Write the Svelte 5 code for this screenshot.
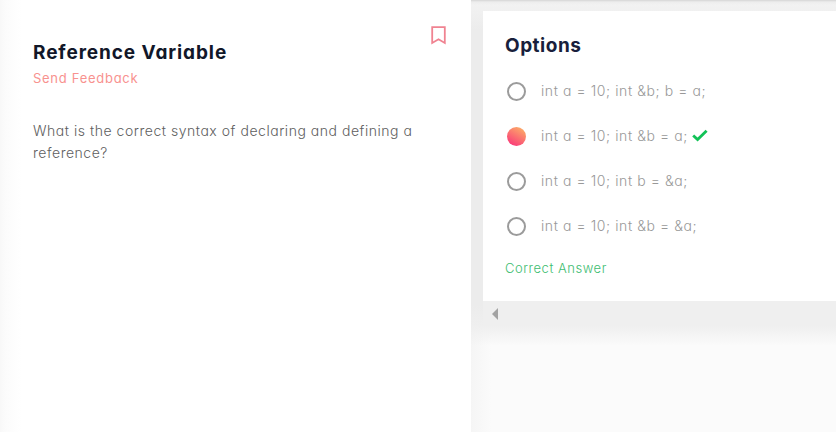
<script>
  const options = [
    { text: 'int a = 10; int &b; b = a;' },
    { text: 'int a = 10; int &b = a;', selected: true },
    { text: 'int a = 10; int b = &a;' },
    { text: 'int a = 10; int &b = &a;' }
  ];
</script>

<main class="page">
  <section class="problem">
    <header class="problem-head">
      <div>
        <h1>Reference Variable</h1>
        <a class="feedback" href="#feedback">Send Feedback</a>
      </div>
      <svg class="bookmark" width="15" height="19" viewBox="0 0 15 19" aria-hidden="true">
        <path d="M1.2 1.2H13.8V17L7.5 13.3L1.2 17Z" />
      </svg>
    </header>
    <p class="question">What is the correct syntax of declaring and defining a<br />reference?</p>
  </section>

  <section class="answers">
    <div class="card">
      <div class="card-body">
        <h2>Options</h2>
        <ul>
          {#each options as option}
            <li>
              <span class="radio" class:selected={option.selected}></span>
              <span class="label">{option.text}</span>
              {#if option.selected}
                <svg class="check" width="16" height="13" viewBox="0 0 16 13" aria-hidden="true">
                  <path d="M1.2 6.4L5.6 10.6L14.6 1.8" />
                </svg>
              {/if}
            </li>
          {/each}
        </ul>
        <p class="verdict">Correct Answer</p>
      </div>
      <div class="scrollbar">
        <svg width="6" height="12" viewBox="0 0 6 12" aria-hidden="true"><path d="M6 0V12L0 6Z" /></svg>
      </div>
    </div>
  </section>
</main>

<style>
  :global(body) {
    margin: 0;
    overflow: hidden;
  }
  .page {
    display: flex;
    width: 836px;
    height: 432px;
    overflow: hidden;
    font-family: Muli, Inter, Lato, sans-serif;
    font-feature-settings: 'cv11', 'calt' 0;
    background: #fbfbfb;
  }
  h1, h2, p, ul {
    margin: 0;
    padding: 0;
  }
  .problem {
    box-sizing: border-box;
    width: 471px;
    flex: none;
    padding: 26px 25px 0 33px;
    background: linear-gradient(90deg, #f8f8f8 0, #fbfbfb 5px, #fefefe 16px, #fff 22px);
  }
  .problem-head {
    display: flex;
    justify-content: space-between;
    height: 94px;
  }
  h1 {
    padding-top: 13px;
    font-size: 19px;
    line-height: 28px;
    font-weight: 700;
    letter-spacing: 0.9px;
    color: #111729;
    white-space: nowrap;
  }
  .feedback {
    display: block;
    padding-top: 1px;
    font-size: 13px;
    line-height: 20px;
    font-weight: 400;
    letter-spacing: 0.72px;
    color: #f8928f;
    text-decoration: none;
  }
  .bookmark {
    flex: none;
  }
  .bookmark path {
    fill: none;
    stroke: #f08391;
    stroke-width: 1.8;
  }
  .question {
    font-size: 14px;
    font-weight: 350;
    line-height: 22px;
    letter-spacing: 0.53px;
    color: #5e5e5e;
    white-space: nowrap;
  }
  .answers {
    flex: 1;
    min-width: 0;
    box-sizing: border-box;
    height: 432px;
    padding: 11px 0 0 12px;
    background:
      linear-gradient(#d5d5d5, #ededed 2px, transparent 5px),
      linear-gradient(#f3f3f3 0, #ececec 30px, #ececec 305px, #efefef 326px, rgba(251, 251, 251, 0) 346px),
      linear-gradient(90deg, #f5f5f5, #fbfbfb 20px);
  }
  .card-body {
    height: 290px;
    box-sizing: border-box;
    padding: 21px 0 0 22px;
    background: #fff;
  }
  h2 {
    font-size: 19px;
    line-height: 28px;
    font-weight: 700;
    letter-spacing: 0.5px;
    color: #191f3c;
  }
  ul {
    padding-top: 9px;
    list-style: none;
  }
  li {
    display: flex;
    align-items: center;
    height: 45px;
  }
  .radio {
    box-sizing: border-box;
    width: 19px;
    height: 19px;
    margin: 0 15px 0 2px;
    border: 2px solid #9b9b9b;
    border-radius: 50%;
  }
  .radio.selected {
    border: 0;
    background: linear-gradient(30deg, #fa3979 10%, #fcac68 90%);
  }
  .label {
    font-size: 14px;
    font-weight: 300;
    line-height: 22px;
    padding-bottom: 2px;
    letter-spacing: 0.58px;
    color: #999;
    white-space: nowrap;
  }
  .check {
    margin: 0 0 2px 4px;
  }
  .check path {
    fill: none;
    stroke: #12c257;
    stroke-width: 2.8;
  }
  .verdict {
    padding-top: 9px;
    font-size: 13px;
    font-weight: 350;
    line-height: 20px;
    letter-spacing: 0.53px;
    color: #3ebd71;
  }
  .scrollbar {
    display: flex;
    height: 25px;
    box-sizing: border-box;
    padding: 7px 0 0 9px;
    background: #efefef;
  }
  .scrollbar path {
    fill: #a3a3a3;
  }
</style>
